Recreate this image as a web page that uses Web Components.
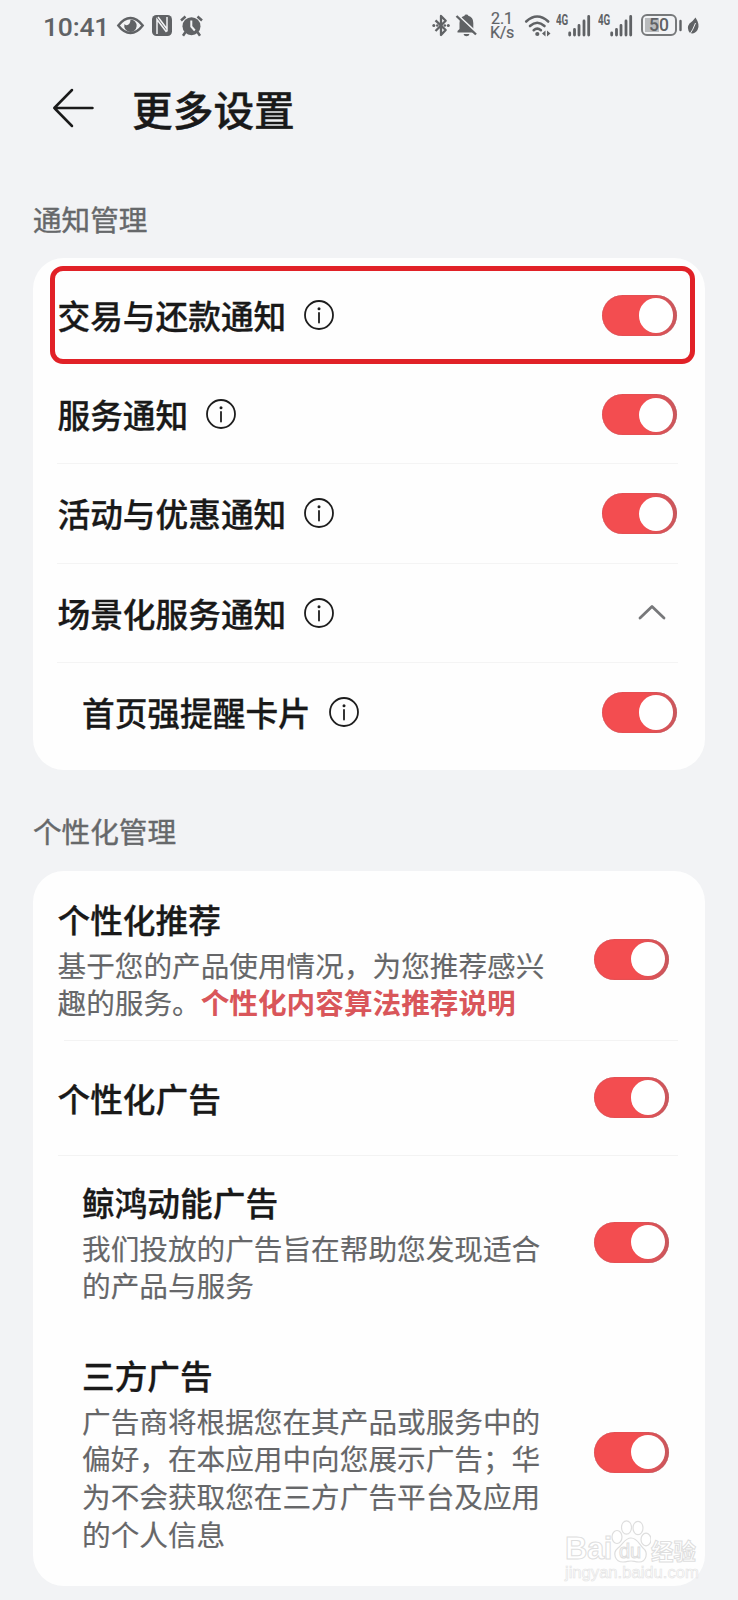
<!DOCTYPE html>
<html lang="zh-CN">
<head>
<meta charset="utf-8">
<title>更多设置</title>
<style>
html,body{margin:0;padding:0}
body{width:738px;height:1600px;overflow:hidden;background:#f2f3f5;color:#191919;font-family:"Noto Sans CJK SC","Noto Sans",sans-serif}
</style>
</head>
<body>
<settings-page>
  <status-bar></status-bar>
  <page-header>更多设置</page-header>
  <settings-group label="通知管理" class="notify">
    <switch-row marked>交易与还款通知</switch-row>
    <switch-row line>服务通知</switch-row>
    <switch-row line>活动与优惠通知</switch-row>
    <switch-row line fold>场景化服务通知</switch-row>
    <switch-row sub>首页强提醒卡片</switch-row>
  </settings-group>
  <settings-group label="个性化管理" class="personal">
    <detail-row class="a" line heading="个性化推荐">基于您的产品使用情况，为您推荐感兴趣的服务。<rule-link>个性化内容算法推荐说明</rule-link></detail-row>
    <detail-row class="b" line heading="个性化广告"></detail-row>
    <detail-row class="c" sub heading="鲸鸿动能广告">我们投放的广告旨在帮助您发现适合的产品与服务</detail-row>
    <detail-row class="d" sub heading="三方广告">广告商将根据您在其产品或服务中的偏好，在本应用中向您展示广告；华为不会获取您在三方广告平台及应用的个人信息</detail-row>
  </settings-group>
  <water-mark></water-mark>
</settings-page>
<script>
const define = (name, html, setup) => customElements.define(name, class extends HTMLElement {
  connectedCallback() {
    if (this.shadowRoot) return;
    const t = document.createElement('template');
    t.innerHTML = html;
    this.attachShadow({mode: 'open'}).append(t.content.cloneNode(true));
    if (setup) setup(this, this.shadowRoot);
  }
});

define('settings-page', `<style>
:host{display:flex;flex-direction:column;position:relative;width:738px;height:1600px;overflow:hidden}
::slotted(.notify){margin-top:39px}
::slotted(.personal){margin-top:41px}
</style><slot></slot>`);

define('status-bar', `<style>
:host{display:flex;align-items:flex-start;justify-content:space-between;height:50px;box-sizing:border-box;padding:14px 39px 0 43px;color:#606265;font-family:Roboto,sans-serif}
.g{display:flex;align-items:flex-start}
svg{display:block;overflow:visible;fill:none;stroke:currentColor;flex:none}
time{font-size:26.5px;line-height:26px;font-weight:500;width:65px;white-space:nowrap;letter-spacing:-.2px}
.rate{display:flex;flex-direction:column;font-size:16px;line-height:14px;width:24px;align-items:center;margin:-2px 11px 0 13px;-webkit-text-stroke:.2px currentColor}
.rate span+span{letter-spacing:-.3px}
.net{font:700 14px/12px "Roboto",sans-serif;width:12px;transform:scaleX(.7);transform-origin:0 0}
.bat{display:flex;align-items:center;justify-content:center;width:36px;height:22px;box-sizing:border-box;border:2px solid #77797b;border-radius:6px;font-size:17.5px;line-height:18px;font-weight:500;background:linear-gradient(90deg,#b9bbbd 14px,transparent 14px) 2px 2px/28px 14px no-repeat;margin:0 2px 0 8px}
.f{fill:currentColor;stroke:none}
</style>
<div class="g"><time>10:41</time>
<svg style="margin-left:9px" width="27" height="22" viewBox="0 0 27 22"><path d="M1.300 11.500Q7 4 13.500 4T25.700 11.500Q20 19 13.500 19T1.300 11.500Z" stroke-width="2.400"/><path class="f" d="M13.500 5.500a6.200 6.200 0 1 1-6 4.500c2 2.500 6 1 6-4.500Z"/></svg>
<svg style="margin:1px 0 0 8px" width="20" height="21" viewBox="0 0 20 21"><rect class="f" width="20" height="21" rx="4.500"/><path d="M5 19V4.500L14.500 17M15 2v14.500M6 2l9 12" stroke="#f2f3f5" stroke-width="1.500"/></svg>
<svg style="margin:1px 0 0 8px" width="23" height="22" viewBox="0 0 23 22"><circle class="f" cx="11.500" cy="11.200" r="9"/><path d="M1 5.500 5.500 1.500M17.500 1.500 22 5.500M5.500 17 3 20.700M17.500 17l2.500 3.700" stroke-width="2.500"/><path d="M11.300 5.500v6l3.500 4" stroke="#f2f3f5" stroke-width="2"/></svg>
</div>
<div class="g">
<svg width="18" height="23" viewBox="0 0 18 23"><path d="M3.500 6.300 13.700 16 9 21V2l4.700 4.800L3.500 17" stroke-width="2.300" stroke-linejoin="round"/><circle class="f" cx="1.800" cy="11.500" r="1.500"/><circle class="f" cx="5.300" cy="11.500" r="1.300"/><circle class="f" cx="12.800" cy="11.500" r="1.300"/><circle class="f" cx="16.300" cy="11.500" r="1.500"/></svg>
<svg style="margin-left:6px" width="21" height="23" viewBox="0 0 21 23"><path class="f" d="M1.500 18.500V17l2-2V9q0-6 5-7.200Q8.500.5 10.300.5t2 1.300q5 1.200 5 7.200v6l2 2v1.500ZM7.500 20h6q-.5 2.300-3 2.300T7.500 20Z"/><path d="M1.500 1 21.500 19.500" stroke="#f2f3f5" stroke-width="2"/><path d="M.5 2 20 20.500" stroke-width="2.400"/></svg>
<div class="rate"><span>2.1</span><span>K/s</span></div>
<svg width="27" height="23" viewBox="0 0 27 23"><path d="M1.200 7.500q11-10 22 0M5 12q7.200-6.500 14.500 0M8.700 16.200q3.500-3 7.200 0" stroke-width="2.600" stroke-linecap="round"/><circle class="f" cx="12.300" cy="20" r="2.100"/><path class="f" d="m20.500 16.500-3.500 3 3.500 3zM22 16.500l3.500 3-3.500 3z"/></svg>
<div class="net" style="margin-left:4px">4G</div>
<svg width="23" height="23" viewBox="0 0 23 23"><path d="M1.700 21V19M6.500 21V15.500M11 21V11.500M16 21V7M20.700 21V2.500" stroke-width="2.800" stroke-linecap="round"/></svg>
<div class="net" style="margin-left:7px">4G</div>
<svg width="23" height="23" viewBox="0 0 23 23"><path d="M1.700 21V19M6.500 21V15.500M11 21V11.500M16 21V7M20.700 21V2.500" stroke-width="2.800" stroke-linecap="round"/></svg>
<div class="bat">50</div>
<svg width="3" height="23" viewBox="0 0 3 23"><path d="M1.500 7v9" stroke-width="2.400" stroke-linecap="round"/></svg>
<svg style="margin-left:5px" width="12" height="23" viewBox="0 0 12 23"><path class="f" d="M8.500 3.500Q13.500 11 10.500 16q-3 4.500-7.500 3Q-1 14 2.500 9.500 6 7 8.500 3.500Z"/><path d="M8.500 9Q6.500 15 2 21.500" stroke="#f2f3f5" stroke-width="1"/></svg>
</div>`);

define('page-header', `<style>
:host{display:flex;align-items:center;height:108px;box-sizing:border-box;padding:6px 0 0 52px;gap:38px;margin-top:2px;font-size:40.700px;font-weight:500;line-height:58px;-webkit-text-stroke:.4px currentColor}
svg{display:block;flex:none;margin-top:-2px}h1{all:unset}
</style><svg width="42" height="40" viewBox="0 0 42 40" fill="none" stroke="#1a1a1a" stroke-width="2.500" stroke-linecap="round" stroke-linejoin="round"><path d="M20 2 2.300 20 20 38M2.300 20H40.500"/></svg><h1><slot></slot></h1>`);

define('settings-group', `<style>
:host{display:block;padding:0 33px}
.label{font-size:28.600px;line-height:40px;height:53px;color:#66686a;-webkit-text-stroke:.4px currentColor}
:host(.notify) .label{height:59px}
.card{display:flex;flex-direction:column;background:#fefefe;border-radius:31px;box-sizing:border-box}
:host(.notify) .card{height:512px;padding-top:8px}
:host(.personal) .card{height:715px;margin-top:6.500px}
::slotted(.a){height:170px;--top:26px;--toggle:68px}
::slotted(.b){height:115px;--top:35px;--toggle:36.500px}
::slotted(.c){height:172px;--top:24px;--toggle:66px}
::slotted(.d){height:230px;--top:25px;--toggle:104px}
</style><div class="label"></div><div class="card"><slot></slot></div>`, (el, r) => {
  r.querySelector('.label').textContent = el.getAttribute('label');
});

define('toggle-switch', `<style>
:host{display:flex;box-sizing:border-box;justify-content:flex-end;align-items:center;width:75.500px;height:41px;border-radius:21px;padding-right:4px;background:linear-gradient(90deg,#f34d50 55%,#c9585d 100%);box-shadow:inset 0 0 1.500px #b35a62;flex:none}
i{display:block;width:34.500px;height:34.500px;border-radius:50%;background:#fff}
</style><i></i>`);

define('info-icon', `<style>:host{display:block;flex:none}svg{display:block}</style>
<svg width="30" height="30" viewBox="0 0 30 30"><circle cx="15" cy="15" r="14" fill="none" stroke="#1d1d1d" stroke-width="1.800"/><circle cx="15" cy="8.800" r="1.500" fill="#1d1d1d"/><path d="M15 13v9.500" stroke="#1d1d1d" stroke-width="1.800" stroke-linecap="round"/></svg>`);

define('switch-row', `<style>
:host{display:flex;position:relative;align-items:center;height:99.200px;box-sizing:border-box;padding:0 28px 0 24.500px;font-size:32.700px;font-weight:500;line-height:48px;flex:none}
:host([sub]){padding-left:49px}
:host([line])::after{content:"";position:absolute;left:24px;right:27px;bottom:0;height:1px;background:#f4f4f4}
.t{white-space:nowrap;margin:-1px 18px 0 0;-webkit-text-stroke:.3px currentColor}
.end{margin-left:auto;display:flex}
.end svg{margin-right:11.500px;margin-top:-3px}
:host([marked])::before{content:"";position:absolute;left:17px;right:10.500px;top:0;bottom:1px;border:5px solid #e12127;border-radius:13px;box-sizing:border-box}
info-icon{margin-top:-1px}
</style><span class="t"><slot></slot></span><info-icon></info-icon><span class="end"></span>`, (el, r) => {
  r.querySelector('.end').innerHTML = el.hasAttribute('fold')
    ? '<svg width="28" height="16" viewBox="0 0 28 16" fill="none" stroke="#77787a" stroke-width="2.800" stroke-linecap="round" stroke-linejoin="round"><path d="M2 14 14 2.500 26 14"/></svg>'
    : '<toggle-switch></toggle-switch>';
});

define('detail-row', `<style>
:host{display:flex;position:relative;justify-content:space-between;align-items:flex-start;box-sizing:border-box;padding:0 36px 0 24.500px;flex:none}
:host([sub]){padding-left:49px}
:host([line])::after{content:"";position:absolute;left:25px;right:27px;bottom:0;height:1px;background:#f3f3f3}
:host(.a[line])::after{left:31px}
.text{width:490px;padding-top:var(--top)}
:host([sub]) .text{width:462px}
.h{font-size:32.700px;font-weight:500;line-height:44px;-webkit-text-stroke:.3px currentColor}
.d{font-size:28.650px;line-height:37.800px;color:#666769;margin-top:5px;-webkit-text-stroke:.15px currentColor}
toggle-switch{margin-top:var(--toggle)}
</style><div class="text"><div class="h"></div><div class="d"><slot></slot></div></div><toggle-switch></toggle-switch>`, (el, r) => {
  r.querySelector('.h').textContent = el.getAttribute('heading');
});

define('rule-link', `<style>:host{color:#d9565a;font-weight:700;-webkit-text-stroke:0}</style><slot></slot>`);

define('water-mark', `<style>
:host{display:block;position:absolute;left:565px;top:1518px;width:136px;height:66px;color:#fff;-webkit-text-stroke:1px #dedede}
.r{display:flex;align-items:flex-end;height:46px;font-family:"Liberation Sans","Noto Sans CJK SC",sans-serif;font-weight:700}
.bai{font-size:31px;line-height:31px;width:46px;letter-spacing:-.5px}
.paw{position:relative;width:40px;height:46px}
svg{display:block}
.du{position:absolute;left:8px;top:21px;font-size:20px;line-height:24px;font-weight:400}
.cn{font:700 22.500px/28px "Noto Sans CJK SC",sans-serif}
.u{font:400 16.600px/18px "Liberation Sans",sans-serif;-webkit-text-stroke:.6px #e3e3e3;white-space:nowrap}
</style><div class="r"><span class="bai">Bai</span><span class="paw"><svg width="40" height="46" viewBox="0 0 40 46" fill="#fff" stroke="#dedede" stroke-width="1.200"><ellipse cx="6" cy="19" rx="5" ry="6.500"/><ellipse cx="15.500" cy="9.500" rx="5" ry="6.700"/><ellipse cx="27" cy="10" rx="5" ry="6.700"/><ellipse cx="35" cy="21.500" rx="5" ry="6.300"/><path d="M20 20c6 0 8 6 12 10 6 5 3 14-4 14-4 0-5-1-8-1s-4 1-8 1c-8 0-11-9-5-14 5-4 7-10 13-10Z"/></svg><span class="du">du</span></span><span class="cn">经验</span></div><div class="u">jingyan.baidu.com</div>`);
</script>
</body>
</html>
